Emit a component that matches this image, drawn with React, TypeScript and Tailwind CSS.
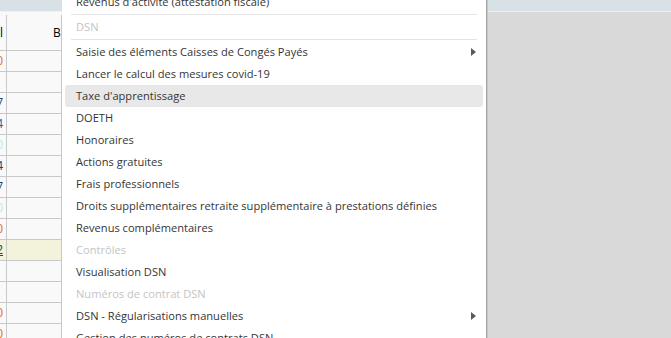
import { ReactNode } from 'react'

type Item = {
  label: string
  disabled?: boolean
  active?: boolean
  submenu?: boolean
  separator?: boolean
}

const items: Item[] = [
  { label: "Revenus d'activité (attestation fiscale)" },
  { label: '', separator: true },
  { label: 'DSN', disabled: true },
  { label: '', separator: true },
  { label: 'Saisie des éléments Caisses de Congés Payés', submenu: true },
  { label: 'Lancer le calcul des mesures covid-19' },
  { label: "Taxe d'apprentissage", active: true },
  { label: 'DOETH' },
  { label: 'Honoraires' },
  { label: 'Actions gratuites' },
  { label: 'Frais professionnels' },
  { label: 'Droits supplémentaires retraite supplémentaire à prestations définies' },
  { label: 'Revenus complémentaires' },
  { label: 'Contrôles', disabled: true },
  { label: 'Visualisation DSN' },
  { label: 'Numéros de contrat DSN', disabled: true },
  { label: 'DSN - Régularisations manuelles', submenu: true },
  { label: 'Gestion des numéros de contrats DSN' },
]

// last digit of each amount, only its right edge shows in the narrow column
const rows: { value: string; color: string; bg?: string; underline?: boolean }[] = [
  { value: '1 250,00', color: 'text-[#d9730d]' },
  { value: '', color: '' },
  { value: '42,17', color: 'text-[#1f3f6e]' },
  { value: '318,24', color: 'text-[#1f5fa8]' },
  { value: '12,00', color: 'text-[#bfe8f2]' },
  { value: '75,34', color: 'text-[#1f3f6e]' },
  { value: '8,47', color: 'text-[#1f3f6e]' },
  { value: '3,00', color: 'text-[#bfe8f2]' },
  { value: '600,00', color: 'text-[#d9730d]' },
  { value: '27,52', color: 'text-[#1f3f6e]', bg: 'bg-[#f3f3dc]', underline: true },
  { value: '', color: '' },
  { value: '', color: '' },
  { value: '980,00', color: 'text-[#d9730d]' },
  { value: '410,00', color: 'text-[#d9730d]' },
]

function Cell({ children, className = '' }: { children?: ReactNode; className?: string }) {
  return (
    <div className={`flex h-full items-center justify-end overflow-hidden ${className}`}>
      {children}
    </div>
  )
}

function App() {
  return (
    <main
      className="flex h-[338px] w-[671px] overflow-hidden bg-[#d9d9d9]"
      style={{ fontFamily: '"Open Sans", "Noto Sans", sans-serif' }}
    >
      {/* grid behind the menu */}
      <div className="flex w-[62px] shrink-0 flex-col bg-[#f9f9f9]">
        <div className="h-[12px] shrink-0 border-b border-[#eef2f4] bg-[#d7e1e6]" />
        <div className="grid h-[39px] shrink-0 grid-cols-[7px_55px] border-b border-[#c8c8c8] pt-[3px] text-[12px] text-black">
          <Cell className="border-r border-[#c8c8c8] pr-[3px]">
            <span className="whitespace-nowrap">Total</span>
          </Cell>
          <div className="flex h-full items-center overflow-hidden border-r border-[#c8c8c8] pl-[46px]">
            <span className="whitespace-nowrap">Base</span>
          </div>
        </div>
        {rows.map((row, i) => (
          <div
            key={i}
            className={`grid h-[21px] shrink-0 grid-cols-[7px_55px] border-b border-[#c8c8c8] text-[12px] ${row.bg ?? ''}`}
          >
            <Cell className={`border-r border-[#c8c8c8] pr-[3px] ${row.color}`}>
              <span className={`whitespace-nowrap ${row.underline ? 'underline' : ''}`}>{row.value}</span>
            </Cell>
            <div className="h-full border-r border-[#c8c8c8]" />
          </div>
        ))}
      </div>

      {/* context menu */}
      <div className="w-[424px] shrink-0 overflow-hidden bg-white">
        <div className="-mt-[9px] flex flex-col px-[3px]">
          {items.map((item, i) =>
            item.separator ? (
              <div key={i} className="flex h-[3px] items-start px-[6px]">
                <div className="mt-[1px] h-px w-full bg-[#e3e3e3]" />
              </div>
            ) : (
              <div
                key={i}
                className={`flex h-[22px] shrink-0 items-center justify-between overflow-hidden rounded-[3px] pl-[11px] pr-[6px] text-[11.1px] ${
                  item.active ? 'bg-[#e8e8e8]' : ''
                } ${item.disabled ? 'text-[#c4c4c4]' : 'text-[#353535]'}`}
              >
                <span className="whitespace-nowrap">{item.label}</span>
                {item.submenu && (
                  <svg width="5" height="8" viewBox="0 0 5 8" className="mr-[1px]">
                    <path d="M0 0 L5 4 L0 8 Z" fill="#5a5a5a" />
                  </svg>
                )}
              </div>
            )
          )}
        </div>
      </div>

      <div className="w-px shrink-0 bg-[#a4a4a4]" />
      <div className="w-px shrink-0 bg-[#c6c6c6]" />

      {/* empty area on the right */}
      <div className="flex flex-1 flex-col">
        <div className="h-[12px] border-b border-[#eef2f4] bg-[#d7e1e6]" />
        <div className="flex-1 bg-[#d9d9d9]" />
      </div>
    </main>
  )
}

export default App
